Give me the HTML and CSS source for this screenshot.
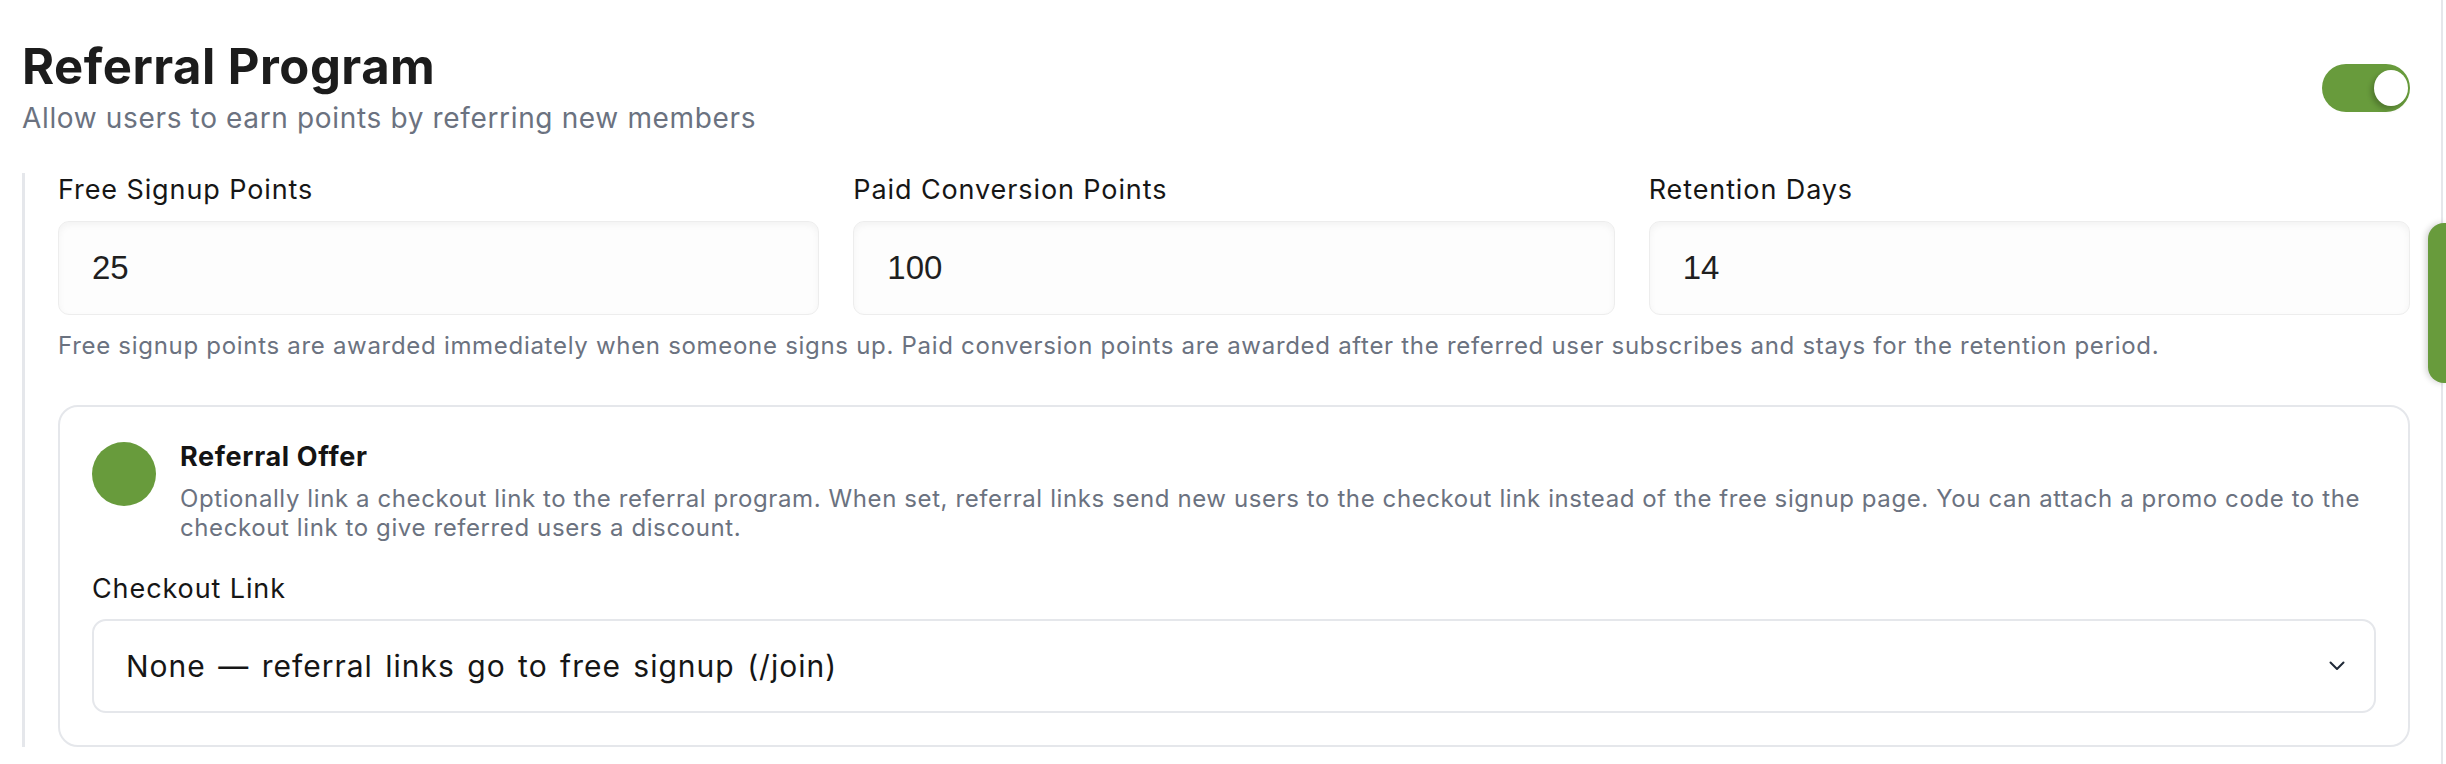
FILE: index.html
```html
<!DOCTYPE html>
<html lang="en">
<head>
<meta charset="utf-8">
<title>Referral Program</title>
<link rel="stylesheet" href="styles.css">
</head>
<body>
<div class="page">
  <main class="main">
    <header class="header">
      <div class="header-text">
        <h1 class="title">Referral Program</h1>
        <p class="subtitle">Allow users to earn points by referring new members</p>
      </div>
      <div class="toggle" role="switch" aria-checked="true"><span class="toggle-knob"></span></div>
    </header>

    <section class="settings">
      <div class="fields">
        <div class="field">
          <label class="label">Free Signup Points</label>
          <div class="input">25</div>
        </div>
        <div class="field">
          <label class="label">Paid Conversion Points</label>
          <div class="input">100</div>
        </div>
        <div class="field">
          <label class="label">Retention Days</label>
          <div class="input">14</div>
        </div>
      </div>
      <p class="help">Free signup points are awarded immediately when someone signs up. Paid conversion points are awarded after the referred user subscribes and stays for the retention period.</p>

      <div class="card">
        <div class="card-head">
          <span class="dot"></span>
          <div class="card-text">
            <h2 class="card-title">Referral Offer</h2>
            <p class="card-desc">Optionally link a checkout link to the referral program. When set, referral links send new users to the checkout link instead of the free signup page. You can attach a promo code to the checkout link to give referred users a discount.</p>
          </div>
        </div>
        <label class="label label-checkout">Checkout Link</label>
        <div class="select">
          <span class="select-text">None — referral links go to free signup (/join)</span>
          <svg class="chevron" width="16" height="10" viewBox="0 0 16 10" aria-hidden="true"><polyline points="1.5,1.5 8,8 14.5,1.5" fill="none" stroke="#1f2937" stroke-width="2" stroke-linecap="round" stroke-linejoin="round"/></svg>
        </div>
      </div>
    </section>
  </main>
  <div class="rail"><span class="rail-thumb"></span></div>
</div>
</body>
</html>
```
FILE: styles.css
```css
* { box-sizing: border-box; }
html, body { margin: 0; padding: 0; background: #ffffff; }
body { font-family: "Inter", "Noto Sans", sans-serif; color: #1a1a1a; }

.page { display: flex; min-height: 100vh; }
.main { flex: 1; padding: 38px 31px 0 22px; }

.rail { width: 5px; border-left: 2px solid #e5e7eb; position: relative; }
.rail-thumb {
  position: absolute; right: 0; top: 223px; width: 18px; height: 160px;
  background: #689b3c; border-radius: 16px 0 0 16px;
  box-shadow: -2px 0 6px rgba(0,0,0,0.18);
}

.header { display: flex; justify-content: space-between; align-items: flex-start; }
.title {
  margin: 0; font-size: 49px; line-height: 58px; font-weight: 700;
  letter-spacing: 0.5px; color: #1c1c1c;
}
.subtitle {
  margin: 5px 0 0; font-size: 28px; line-height: 34px; letter-spacing: 0.65px;
  color: #6b7280;
}
.toggle {
  margin-top: 26px; width: 88px; height: 48px; border-radius: 24px;
  background: #689b3c; position: relative; flex-shrink: 0;
}
.toggle-knob {
  position: absolute; top: 6px; left: 52px; width: 34px; height: 36px;
  border-radius: 50%; background: #ffffff;
  box-shadow: -3px 3px 5px rgba(0,0,0,0.22);
}

.settings {
  margin-top: 38px; border-left: 3px solid #e5e7eb;
  padding: 1px 0 0 33px;
}
.fields { display: grid; grid-template-columns: repeat(3, 1fr); column-gap: 34px; }
.field { display: flex; flex-direction: column; }
.label {
  display: block; font-size: 27px; line-height: 32px; letter-spacing: 0.9px;
  color: #161616;
}
.input {
  margin-top: 15px; height: 94px; border: 1.5px solid #ededed; border-radius: 11px;
  background: #fdfdfd; box-shadow: inset 0 3px 7px rgba(0,0,0,0.045);
  display: flex; align-items: center; padding: 0 33px;
  font-family: "Liberation Sans", Arial, sans-serif; font-size: 33px; color: #1f1f1f;
}
.help {
  margin: 16px 0 0; font-size: 24px; line-height: 30px; letter-spacing: 0.7px;
  color: #6b7280;
}

.card {
  margin-top: 44px; border: 2px solid #e5e7eb; border-radius: 20px;
  padding: 34px 32px 32px 32px;
}
.card-head { display: flex; align-items: flex-start; gap: 24px; }
.dot { width: 64px; height: 64px; border-radius: 50%; background: #689b3c; flex-shrink: 0; margin-top: 1px; }
.card-text { flex: 1; }
.card-title {
  margin: 0; font-size: 27px; line-height: 32px; font-weight: 700;
  letter-spacing: 0.65px; color: #141414;
}
.card-desc {
  margin: 11px 0 0; font-size: 24px; line-height: 29px; letter-spacing: 0.6px;
  color: #6b7280;
}
.label-checkout { margin-top: 31px; }
.select {
  margin-top: 14px; height: 94px; border: 2px solid #e5e7eb; border-radius: 14px;
  display: flex; align-items: center; justify-content: space-between;
  padding: 0 29px 0 32px; background: #ffffff;
}
.select-text {
  font-size: 30px; letter-spacing: 1px; word-spacing: 3px; color: #161616;
}
.chevron { flex-shrink: 0; }
```
